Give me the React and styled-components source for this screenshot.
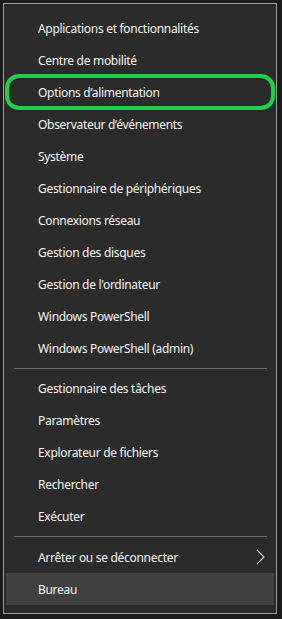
import styled, { createGlobalStyle } from 'styled-components'

const GlobalStyle = createGlobalStyle`
  html, body {
    margin: 0;
    padding: 0;
    background: #1b1b1b;
  }
  body {
    font-family: "Noto Sans", "Open Sans", sans-serif;
  }
`

const Screen = styled.div`
  width: 282px;
  height: 619px;
  padding: 3px 0 0 3px;
  box-sizing: border-box;
  overflow: hidden;
`

const Menu = styled.ul`
  list-style: none;
  margin: 0;
  width: 274px;
  height: 611px;
  box-sizing: border-box;
  padding: 8px 0 7px;
  background: #2b2b2b;
  border: 1px solid #a0a0a0;
  display: flex;
  flex-direction: column;
`

const Item = styled.li`
  position: relative;
  flex: none;
  height: 32px;
  margin: 0 2px;
  padding-left: 32px;
  padding-right: 9px;
  display: flex;
  align-items: center;
  justify-content: space-between;
  color: #f4f4f4;
  font-size: 12px;
  letter-spacing: -0.3px;
  background: ${(p) => (p.$active ? '#404040' : 'transparent')};

  ${(p) =>
    p.$circled &&
    `
    &::after {
      content: '';
      position: absolute;
      left: -1px;
      right: -1px;
      top: -2px;
      bottom: -2px;
      border: 4px solid #1fcf4a;
      border-radius: 14px;
    }
  `}
`

const Separator = styled.li`
  flex: none;
  height: 1px;
  margin: 4px 9px ${(p) => (p.$last ? '4px' : '3px')} 10px;
  background: #6a6a6a;
`

const Chevron = () => (
  <svg width="9" height="16" viewBox="0 0 9 16">
    <path d="M1 1 L8 8 L1 15" fill="none" stroke="#cfcfcf" strokeWidth="1.1" />
  </svg>
)

const groups = [
  [
    'Applications et fonctionnalités',
    'Centre de mobilité',
    'Options d’alimentation',
    'Observateur d’événements',
    'Système',
    'Gestionnaire de périphériques',
    'Connexions réseau',
    'Gestion des disques',
    "Gestion de l'ordinateur",
    'Windows PowerShell',
    'Windows PowerShell (admin)',
  ],
  ['Gestionnaire des tâches', 'Paramètres', 'Explorateur de fichiers', 'Rechercher', 'Exécuter'],
]

export default function App() {
  return (
    <Screen>
      <GlobalStyle />
      <Menu>
        {groups.map((group, gi) => [
          ...group.map((label) => (
            <Item key={label} $circled={label === 'Options d’alimentation'}>
              {label}
            </Item>
          )),
          <Separator key={'sep' + gi} $last={gi === groups.length - 1} />,
        ])}
        <Item>
          Arrêter ou se déconnecter
          <Chevron />
        </Item>
        <Item $active>Bureau</Item>
      </Menu>
    </Screen>
  )
}
